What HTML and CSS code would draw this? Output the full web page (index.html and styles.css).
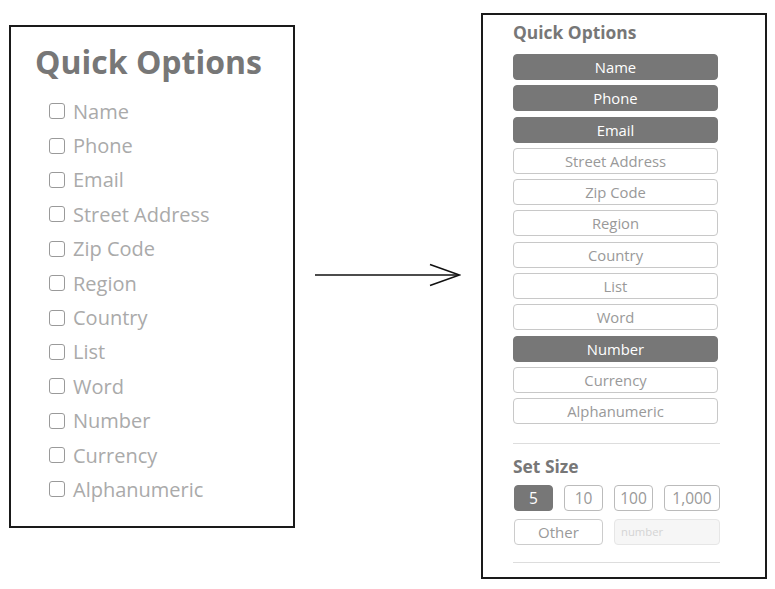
FILE: index.html
```html
<!DOCTYPE html>
<html>
<head>
<meta charset="utf-8">
<link rel="stylesheet" href="styles.css">
</head>
<body>
<div class="stage">
  <section class="panel-a">
    <h1 class="title-a">Quick Options</h1>
    <ul class="checklist">
      <li class="opt"><span class="box"></span>Name</li>
      <li class="opt"><span class="box"></span>Phone</li>
      <li class="opt"><span class="box"></span>Email</li>
      <li class="opt"><span class="box"></span>Street Address</li>
      <li class="opt"><span class="box"></span>Zip Code</li>
      <li class="opt"><span class="box"></span>Region</li>
      <li class="opt"><span class="box"></span>Country</li>
      <li class="opt"><span class="box"></span>List</li>
      <li class="opt"><span class="box"></span>Word</li>
      <li class="opt"><span class="box"></span>Number</li>
      <li class="opt"><span class="box"></span>Currency</li>
      <li class="opt"><span class="box"></span>Alphanumeric</li>
    </ul>
  </section>
  <svg class="arrow" width="146" height="26" viewBox="0 0 146 26">
    <path d="M0 12 H144" stroke="#111" stroke-width="1.6" fill="none"/>
    <path d="M115 1.5 L144.5 12 L115 22.5" stroke="#111" stroke-width="1.6" fill="none"/>
  </svg>
  <section class="panel-b">
    <h2 class="title-b">Quick Options</h2>
    <div class="btns">
      <div class="btn on">Name</div>
      <div class="btn on">Phone</div>
      <div class="btn on">Email</div>
      <div class="btn">Street Address</div>
      <div class="btn">Zip Code</div>
      <div class="btn">Region</div>
      <div class="btn">Country</div>
      <div class="btn">List</div>
      <div class="btn">Word</div>
      <div class="btn on">Number</div>
      <div class="btn">Currency</div>
      <div class="btn">Alphanumeric</div>
    </div>
    <hr class="sep sep-1">
    <h2 class="title-b title-size">Set Size</h2>
    <div class="sizes">
      <div class="sz on">5</div>
      <div class="sz">10</div>
      <div class="sz">100</div>
      <div class="sz wide">1,000</div>
    </div>
    <div class="sizes row2">
      <div class="sz other">Other</div>
      <div class="num">number</div>
    </div>
    <hr class="sep sep-2">
  </section>
</div>
</body>
</html>
```

FILE: styles.css
```css
html, body {
  margin: 0;
  padding: 0;
  background: #fff;
}
body {
  font-family: "Open Sans", "Liberation Sans", sans-serif;
}
.stage {
  display: flex;
  align-items: flex-start;
  width: 775px;
  height: 589px;
}
.panel-a {
  box-sizing: border-box;
  width: 286px;
  height: 503px;
  margin: 25px 0 0 9px;
  border: 2px solid #1a1a1a;
  padding: 13px 0 0 24px;
}
.title-a {
  margin: 0;
  font-size: 32px;
  font-weight: 700;
  color: #777;
  line-height: 44px;
}
.checklist {
  list-style: none;
  margin: 10px 0 0 14px;
  padding: 0;
}
.opt {
  display: flex;
  align-items: center;
  height: 34.4px;
  font-size: 20px;
  color: #aaa;
}
.box {
  box-sizing: border-box;
  width: 16px;
  height: 16px;
  border: 1.5px solid #9a9a9a;
  border-radius: 3px;
  margin-right: 8px;
}
.arrow {
  margin: 263px 0 0 20px;
  flex: none;
}
.panel-b {
  box-sizing: border-box;
  width: 286px;
  height: 566px;
  margin: 13px 0 0 20px;
  border: 2px solid #1a1a1a;
  padding: 5px 0 0 30px;
}
.title-b {
  margin: 0;
  font-size: 17.4px;
  font-weight: 700;
  color: #777;
  line-height: 24px;
}
.btns {
  display: flex;
  flex-direction: column;
  gap: 5.3px;
  margin-top: 10px;
  width: 205px;
}
.btn {
  box-sizing: border-box;
  height: 26px;
  border: 1px solid #c8c8c8;
  border-radius: 4px;
  font-size: 14.8px;
  color: #999;
  text-align: center;
  line-height: 24px;
  background: #fff;
}
.btn.on {
  background: #777;
  border-color: #777;
  color: #fff;
}
.sep {
  border: 0;
  border-top: 1px solid #ddd;
  margin: 0;
  width: 207px;
}
.sep-1 {
  margin-top: 19px;
}
.title-size {
  margin-top: 10px;
}
.sizes {
  display: flex;
  gap: 11px;
  margin: 7px 0 0 1px;
  width: 207px;
}
.row2 {
  margin-top: 8px;
}
.sz {
  box-sizing: border-box;
  width: 39px;
  height: 26px;
  border: 1px solid #bbb;
  border-radius: 4px;
  text-align: center;
  line-height: 24px;
  font-size: 15.5px;
  color: #999;
}
.sz.on {
  background: #777;
  border-color: #777;
  color: #fff;
}
.sz.wide {
  width: 56px;
}
.sz.other {
  width: 89px;
  border-color: #ccc;
  font-size: 15px;
}
.num {
  box-sizing: border-box;
  width: 106px;
  height: 26px;
  border: 1px solid #e6e6e6;
  border-radius: 4px;
  background: #f6f6f6;
  font-size: 11.3px;
  color: #d4d4d4;
  line-height: 24px;
  padding-left: 6px;
}
.sep-2 {
  margin-top: 17px;
}
```
